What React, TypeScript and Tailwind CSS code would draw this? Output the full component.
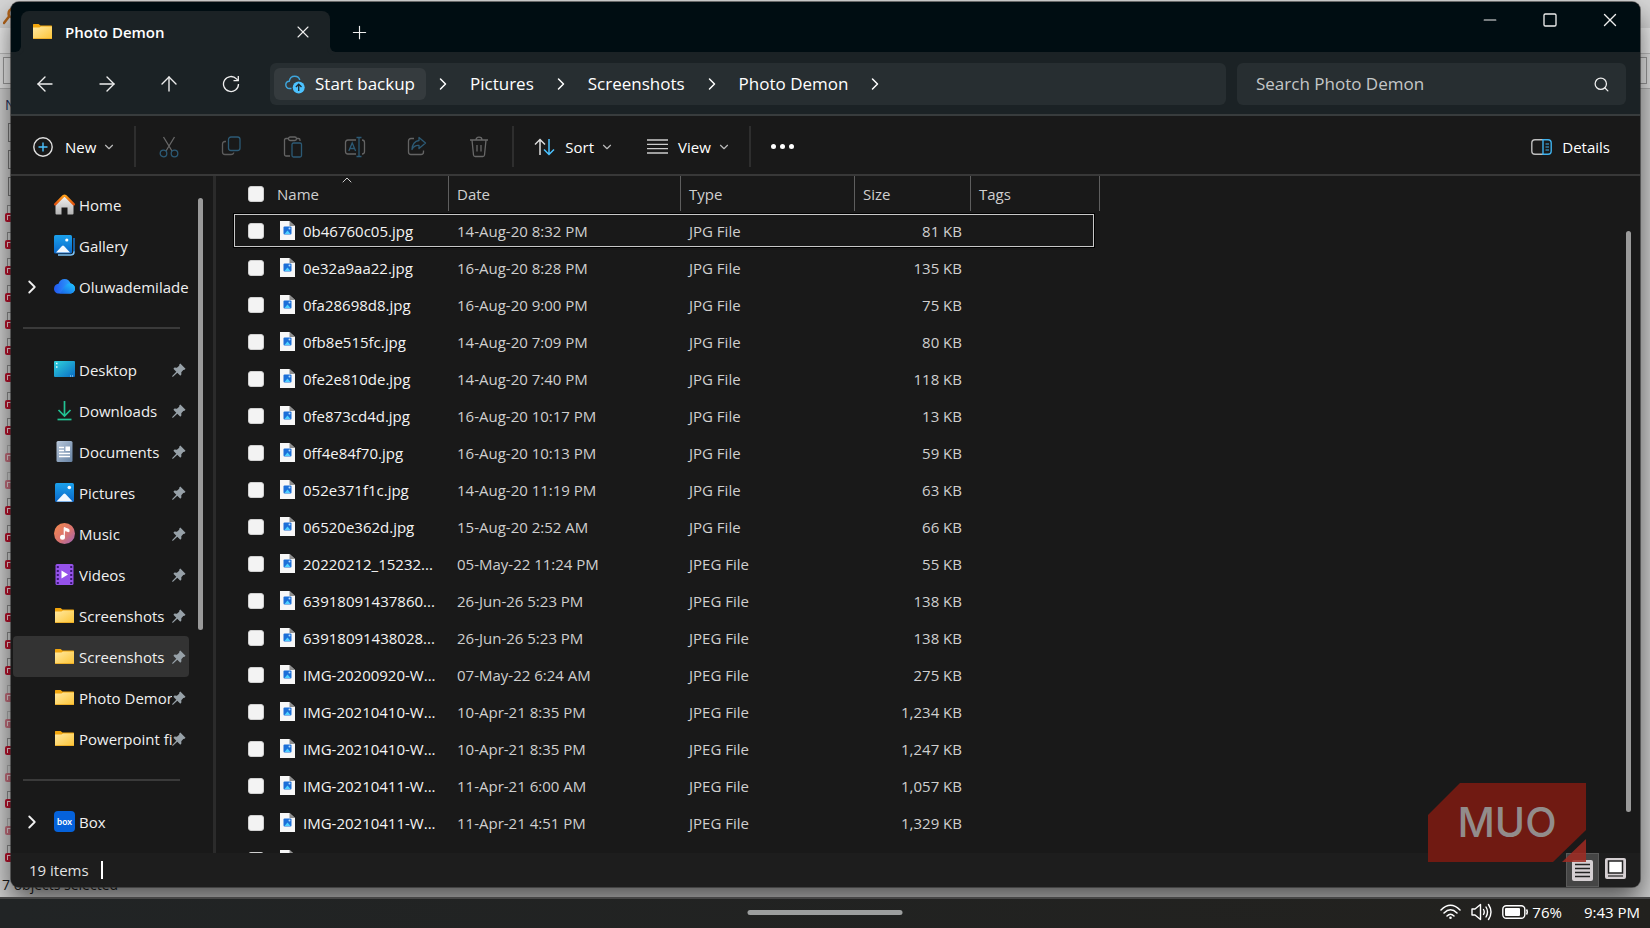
import React from 'react'
import {
  ArrowLeft,
  ArrowRight,
  ArrowUp,
  ChevronDown,
  ChevronRight,
  ChevronUp,
  Minus,
  Plus,
  Search,
  Square,
  X,
} from 'lucide-react'

type FileRow = { name: string; date: string; type: string; size: string }

const files: FileRow[] = [
  { name: '0b46760c05.jpg', date: '14-Aug-20 8:32 PM', type: 'JPG File', size: '81 KB' },
  { name: '0e32a9aa22.jpg', date: '16-Aug-20 8:28 PM', type: 'JPG File', size: '135 KB' },
  { name: '0fa28698d8.jpg', date: '16-Aug-20 9:00 PM', type: 'JPG File', size: '75 KB' },
  { name: '0fb8e515fc.jpg', date: '14-Aug-20 7:09 PM', type: 'JPG File', size: '80 KB' },
  { name: '0fe2e810de.jpg', date: '14-Aug-20 7:40 PM', type: 'JPG File', size: '118 KB' },
  { name: '0fe873cd4d.jpg', date: '16-Aug-20 10:17 PM', type: 'JPG File', size: '13 KB' },
  { name: '0ff4e84f70.jpg', date: '16-Aug-20 10:13 PM', type: 'JPG File', size: '59 KB' },
  { name: '052e371f1c.jpg', date: '14-Aug-20 11:19 PM', type: 'JPG File', size: '63 KB' },
  { name: '06520e362d.jpg', date: '15-Aug-20 2:52 AM', type: 'JPG File', size: '66 KB' },
  { name: '20220212_15232...', date: '05-May-22 11:24 PM', type: 'JPEG File', size: '55 KB' },
  { name: '63918091437860...', date: '26-Jun-26 5:23 PM', type: 'JPEG File', size: '138 KB' },
  { name: '63918091438028...', date: '26-Jun-26 5:23 PM', type: 'JPEG File', size: '138 KB' },
  { name: 'IMG-20200920-W...', date: '07-May-22 6:24 AM', type: 'JPEG File', size: '275 KB' },
  { name: 'IMG-20210410-W...', date: '10-Apr-21 8:35 PM', type: 'JPEG File', size: '1,234 KB' },
  { name: 'IMG-20210410-W...', date: '10-Apr-21 8:35 PM', type: 'JPEG File', size: '1,247 KB' },
  { name: 'IMG-20210411-W...', date: '11-Apr-21 6:00 AM', type: 'JPEG File', size: '1,057 KB' },
  { name: 'IMG-20210411-W...', date: '11-Apr-21 4:51 PM', type: 'JPEG File', size: '1,329 KB' },
]

const FolderIcon = () => (
  <svg width="21" height="21" viewBox="0 0 21 21">
    <defs>
      <linearGradient id="folder" x1="0" y1="0" x2="1" y2="1">
        <stop offset="0" stopColor="#ffe9a3" />
        <stop offset="1" stopColor="#fdc536" />
      </linearGradient>
    </defs>
    <path d="M1 3.5Q1 3 1.6 3H6.6L8.4 4.6H19.4Q20 4.6 20 5.2V9H1Z" fill="#f2a60d" />
    <path d="M1 6.6H7.4L9 5.4H20V17.4Q20 18 19.4 18H1.6Q1 18 1 17.4Z" fill="url(#folder)" />
    <path d="M1 17.5H20" stroke="#e9a722" strokeWidth="0.8" />
  </svg>
)

const HomeIcon = () => (
  <svg width="21" height="21" viewBox="0 0 21 21">
    <defs>
      <linearGradient id="home" x1="0" y1="0" x2="0" y2="1">
        <stop offset="0" stopColor="#f2f2f2" />
        <stop offset="1" stopColor="#b4b4b4" />
      </linearGradient>
      <linearGradient id="roof" x1="0" y1="0" x2="0" y2="1">
        <stop offset="0" stopColor="#ffa01a" />
        <stop offset="1" stopColor="#e04f0c" />
      </linearGradient>
    </defs>
    <path d="M1.5 10L10.5 2L19.5 10V19.5Q19.5 20.5 18.5 20.5H13.5V13.5H7.5V20.5H2.5Q1.5 20.5 1.5 19.5Z" fill="url(#home)" />
    <path d="M1.2 10.3L9.3 2.2Q10.5 1.2 11.7 2.2L19.8 10.3" fill="none" stroke="url(#roof)" strokeWidth="2.4" strokeLinecap="round" />
  </svg>
)

const PictureIcon = ({ stacked }: { stacked?: boolean }) => (
  <svg width="21" height="21" viewBox="0 0 21 21">
    <defs>
      <linearGradient id="sky" x1="0" y1="0" x2="0" y2="1">
        <stop offset="0" stopColor="#1ba1ec" />
        <stop offset="1" stopColor="#0a67c9" />
      </linearGradient>
    </defs>
    {stacked ? (
      <>
        <path d="M20 3V17" stroke="#1670c4" strokeWidth="1.6" />
        <path d="M20 16.5Q20 20 16.8 20H4" fill="none" stroke="#7cc3f7" strokeWidth="1.6" />
        <rect x="0" y="0" width="18" height="18.5" rx="1.5" fill="url(#sky)" />
        <path d="M2 17.5L8 11Q9 10 10 11L16 17.5Z" fill="#f1f8ff" />
        <circle cx="12.8" cy="5" r="1.6" fill="#fff" />
      </>
    ) : (
      <>
        <rect x="1" y="1" width="19" height="19" rx="1.5" fill="url(#sky)" />
        <path d="M2.5 19.5L9.5 12Q10.5 11 11.5 12L18.5 19.5Z" fill="#f1f8ff" />
        <circle cx="15.3" cy="5.5" r="1.8" fill="#fff" />
      </>
    )}
  </svg>
)

const CloudIcon = () => (
  <svg width="21" height="21" viewBox="0 0 21 21">
    <defs>
      <linearGradient id="cloudBack" x1="0" y1="0" x2="1" y2="0">
        <stop offset="0" stopColor="#2257f0" />
        <stop offset="1" stopColor="#2fb5ff" />
      </linearGradient>
      <linearGradient id="cloudFront" x1="0" y1="1" x2="1" y2="0">
        <stop offset="0" stopColor="#1a5fe8" />
        <stop offset="1" stopColor="#1fc8ff" />
      </linearGradient>
    </defs>
    <path d="M5 17.5C1.800 17.5 0 15.3 0 12.7C0 10 2 8 4.5 7.7C5.3 4.7 7.7 3 10.6 3C13.6 3 15.8 4.8 16.6 7.5C19.2 7.9 21 10 21 12.5C21 15.3 19 17.5 16 17.5Z" fill="url(#cloudBack)" />
    <path d="M5 17.5C8.5 17 9 9 15 7.5C18.5 7 21 9.5 21 12.5C21 15.3 19 17.5 16 17.5Z" fill="url(#cloudFront)" />
  </svg>
)

const DesktopIcon = () => (
  <svg width="21" height="21" viewBox="0 0 21 21">
    <defs>
      <linearGradient id="desk" x1="0" y1="0" x2="1" y2="1">
        <stop offset="0" stopColor="#2fd2dc" />
        <stop offset="1" stopColor="#0a6cc4" />
      </linearGradient>
    </defs>
    <rect x="0" y="2" width="21" height="16" rx="1" fill="url(#desk)" />
    <path d="M2 4.5H3.5M2 8H3.5" stroke="#e7fbff" strokeWidth="1.6" />
    <path d="M16 17H17M18 17H19" stroke="#bfe6ff" strokeWidth="1" />
  </svg>
)

const DownloadIcon = () => (
  <svg width="21" height="21" viewBox="0 0 21 21" fill="none" stroke="#22c293" strokeWidth="1.7">
    <path d="M10.5 1V15.5M4.5 10L10.5 16L16.5 10" />
    <path d="M3.5 19.5H17.5" />
  </svg>
)

const DocumentIcon = () => (
  <svg width="21" height="21" viewBox="0 0 21 21">
    <defs>
      <linearGradient id="doc" x1="0" y1="0" x2="1" y2="1">
        <stop offset="0" stopColor="#b9c8da" />
        <stop offset="1" stopColor="#6682a3" />
      </linearGradient>
    </defs>
    <rect x="2.500" y="0" width="16" height="21" rx="1.5" fill="url(#doc)" />
    <path d="M5 6.500H10M5 9.500H10M5 12.500H16M5 15.500H16" stroke="#fff" strokeWidth="1.3" />
    <rect x="11.5" y="5.5" width="4.5" height="4.5" fill="#fff" />
  </svg>
)

const MusicIcon = () => (
  <svg width="21" height="21" viewBox="0 0 21 21">
    <defs>
      <linearGradient id="music" x1="0" y1="0" x2="1" y2="1">
        <stop offset="0" stopColor="#f58a4b" />
        <stop offset="0.55" stopColor="#d9736f" />
        <stop offset="1" stopColor="#9a62b8" />
      </linearGradient>
    </defs>
    <circle cx="10.5" cy="10.5" r="10.5" fill="url(#music)" />
    <circle cx="8.5" cy="14.3" r="2.5" fill="#fff" />
    <path d="M10.2 14V4.5L15 6.5V8.8L11.4 7.6" fill="#fff" stroke="#fff" strokeWidth="1" />
  </svg>
)

const VideoIcon = () => (
  <svg width="21" height="21" viewBox="0 0 21 21">
    <rect x="1.5" y="0" width="18" height="21" rx="1.5" fill="#9552ea" />
    <path d="M3.8 2V20M17.2 2V20" stroke="#3b1875" strokeWidth="2" strokeDasharray="2 2" />
    <path d="M7.5 6.5L14 10.5L7.5 14.5Z" fill="#fff" />
  </svg>
)

const BoxIcon = () => (
  <svg width="21" height="21" viewBox="0 0 21 21">
    <rect width="21" height="21" rx="4" fill="#0562db" />
    <text x="10.5" y="13.5" textAnchor="middle" fontSize="9" fontWeight="700" fill="#fff" fontFamily="Lato, sans-serif">box</text>
  </svg>
)

const PinIcon = () => (
  <svg width="14" height="14" viewBox="0 0 14 14" className="shrink-0">
    <path d="M8.3 0.5L13.5 5.7L12.6 6.8L11.3 6.9L9.3 9.3L9.4 11.6L8.3 12.7L5.3 9.7L1 13.8L0.2 13.8L0.2 13L4.3 8.7L1.4 5.8L2.5 4.6L4.9 4.8L7.2 2.8L7.3 1.4Z" fill="#97a1a8" />
  </svg>
)

const JpgIcon = () => (
  <svg width="15" height="19" viewBox="0 0 15 19" className="shrink-0">
    <path d="M0 0H9.5L15 5V19H0Z" fill="#f7f7f7" />
    <path d="M9.5 0L15 5H9.5Z" fill="#8d8d8d" />
    <rect x="3.5" y="5.5" width="8" height="8" rx="1" fill="#1c6fd8" />
    <path d="M4.5 13L7.5 9.5L10.5 13Z" fill="#4fd0ff" />
    <circle cx="9.5" cy="7.5" r="1" fill="#b9dcff" />
  </svg>
)

const CutIcon = () => (
  <svg width="20" height="22" viewBox="0 0 20 22" fill="none" strokeWidth="1.3">
    <path d="M4.5 1L13 15M15.5 1L7 15" stroke="#686868" />
    <circle cx="4.5" cy="17.5" r="3.3" stroke="#2c5a75" />
    <circle cx="15.5" cy="17.5" r="3.3" stroke="#2c5a75" />
  </svg>
)

const CopyIcon = () => (
  <svg width="20" height="20" viewBox="0 0 20 20" fill="none" strokeWidth="1.3">
    <path d="M5 5.5H4Q1.5 5.5 1.5 8V16Q1.5 18.5 4 18.5H10Q12.5 18.5 12.8 16.5" stroke="#5c5c5c" />
    <rect x="7.5" y="1" width="11.5" height="13.5" rx="2.5" stroke="#2c5a75" />
  </svg>
)

const PasteIcon = () => (
  <svg width="20" height="22" viewBox="0 0 20 22" fill="none" strokeWidth="1.3">
    <path d="M5.5 2.5H3Q1.5 2.5 1.5 4V18.5Q1.5 20 3 20H7M14 2.5H15.5Q17 2.5 17 4V5" stroke="#646464" />
    <rect x="5.5" y="1" width="8" height="3.5" rx="1.7" stroke="#646464" />
    <rect x="9" y="7" width="9.5" height="14" rx="1.5" stroke="#2c5a75" />
  </svg>
)

const RenameIcon = () => (
  <svg width="22" height="22" viewBox="0 0 22 22" fill="none" strokeWidth="1.3">
    <path d="M12 4H4Q1.5 4 1.5 6.5V15.5Q1.5 18 4 18H12M18 4Q20.5 4 20.5 6.5V15.5Q20.5 18 18 18" stroke="#646464" />
    <path d="M15 1.5V20.5M12.5 1.5H17.5M12.5 20.5H17.5M4.8 15L8.2 7L11.6 15M6 12.5H10.4" stroke="#2c5a75" />
  </svg>
)

const ShareIcon = () => (
  <svg width="20" height="20" viewBox="0 0 20 20" fill="none" strokeWidth="1.3" strokeLinejoin="round">
    <path d="M7 2.5H4Q1.5 2.5 1.5 5V16Q1.5 18.5 4 18.5H14Q16.5 18.5 16.5 16V14.5" stroke="#646464" />
    <path d="M12 1.5L18.5 7L12 12.5V9.5Q7.5 9 5 13.5Q5.5 5.5 12 4.5Z" stroke="#2c5a75" />
  </svg>
)

const TrashIcon = () => (
  <svg width="20" height="22" viewBox="0 0 20 22" fill="none" stroke="#686868" strokeWidth="1.3">
    <path d="M1 4H19M3 4L4.5 19Q4.7 20.5 6.2 20.5H13.8Q15.3 20.5 15.5 19L17 4M8 9V15.5M12 9V15.5M7 4Q7 1.2 10 1.2Q13 1.2 13 4" />
  </svg>
)

const BackupIcon = () => (
  <svg width="20" height="19" viewBox="0 0 20 19" className="shrink-0">
    <path d="M6.5 13.5H4.5C2.3 13.5 0.8 11.8 0.8 9.8C0.8 7.8 2.3 6.3 4.3 6.2C4.7 3.3 6.9 1.2 9.7 1.2C12.2 1.2 14.2 2.7 14.8 5" fill="none" stroke="#3ea6dd" strokeWidth="1.4" />
    <circle cx="13.7" cy="12.5" r="6" fill="#4cc2ff" />
    <path d="M13.7 16V9.5M10.9 12L13.7 9.2L16.5 12" fill="none" stroke="#1f2a30" strokeWidth="1.3" />
  </svg>
)

const RefreshIcon = () => (
  <svg width="18" height="18" viewBox="0 0 18 18" fill="none" stroke="#eee" strokeWidth="1.3">
    <path d="M16.5 9A7.5 7.5 0 1 1 14.5 3.9L16 5.5" />
    <path d="M16.3 1V5.7H11.5" />
  </svg>
)

const DetailsIcon = () => (
  <svg width="21" height="16" viewBox="0 0 21 16" fill="none" strokeWidth="1.4">
    <path d="M12 0.8H4Q0.8 0.8 0.8 4V12Q0.8 15.2 4 15.2H12" stroke="#bdbdbd" />
    <path d="M12 0.8H17Q20.2 0.8 20.2 4V12Q20.2 15.2 17 15.2H12Z" stroke="#3fb2ee" />
    <path d="M14.5 5H18M14.5 8H18M14.5 11H18" stroke="#3fb2ee" strokeWidth="1.2" />
  </svg>
)

const WifiIcon = () => (
  <svg width="21" height="16" viewBox="0 0 21 16" fill="none" stroke="#fff" strokeWidth="1.5" strokeLinecap="round">
    <path d="M1 6Q10.5 -3.5 20 6M4 9Q10.5 2.5 17 9M7 12Q10.5 8.5 14 12" />
    <circle cx="10.5" cy="13.8" r="1.3" fill="#fff" stroke="none" />
  </svg>
)

const VolumeIcon = () => (
  <svg width="21" height="18" viewBox="0 0 21 18" fill="none" stroke="#fff" strokeWidth="1.4" strokeLinecap="round" strokeLinejoin="round">
    <path d="M1 6H4L9.5 1.5V16.5L4 12H1Z" />
    <path d="M12.5 6.5Q14 9 12.5 11.5M15 4Q18 9 15 14M17.5 1.5Q22.5 9 17.5 16.5" />
  </svg>
)

const BatteryIcon = () => (
  <svg width="26" height="14" viewBox="0 0 26 14">
    <rect x="0.8" y="0.8" width="22" height="12.4" rx="3.5" fill="none" stroke="#fff" strokeWidth="1.4" />
    <rect x="3" y="3" width="15" height="8" rx="1" fill="#fff" />
    <path d="M24.5 4.5Q26 7 24.5 9.5" stroke="#fff" strokeWidth="1.5" fill="none" />
  </svg>
)

type NavItem = { label: string; icon: React.ReactNode; pinned?: boolean; expandable?: boolean; active?: boolean }

const topItems: NavItem[] = [
  { label: 'Home', icon: <HomeIcon /> },
  { label: 'Gallery', icon: <PictureIcon stacked /> },
  { label: 'Oluwademilade', icon: <CloudIcon />, expandable: true },
]

const pinnedItems: NavItem[] = [
  { label: 'Desktop', icon: <DesktopIcon />, pinned: true },
  { label: 'Downloads', icon: <DownloadIcon />, pinned: true },
  { label: 'Documents', icon: <DocumentIcon />, pinned: true },
  { label: 'Pictures', icon: <PictureIcon />, pinned: true },
  { label: 'Music', icon: <MusicIcon />, pinned: true },
  { label: 'Videos', icon: <VideoIcon />, pinned: true },
  { label: 'Screenshots', icon: <FolderIcon />, pinned: true },
  { label: 'Screenshots', icon: <FolderIcon />, pinned: true, active: true },
  { label: 'Photo Demon', icon: <FolderIcon />, pinned: true },
  { label: 'Powerpoint files', icon: <FolderIcon />, pinned: true },
]

const SideItem = ({ item }: { item: NavItem }) => (
  <a
    href="#"
    className={`flex h-[41px] items-center text-[15px] text-[#f0f0f0] ${item.active ? 'rounded-sm bg-[#333333]' : ''}`}
  >
    <span className="flex w-[41px] shrink-0 justify-center pr-1">
      {item.expandable && <ChevronRight size={22} strokeWidth={2} />}
    </span>
    <span className="shrink-0">{item.icon}</span>
    <span className="ml-1 min-w-0 flex-1 overflow-hidden whitespace-nowrap">{item.label}</span>
    {item.pinned && (
      <span className="mr-[3px]">
        <PinIcon />
      </span>
    )}
  </a>
)

const SideRule = () => (
  <div className="flex h-[42px] items-center pr-[9px] pl-[10px]">
    <div className="h-0.5 w-full bg-[#3a3a3a]" />
  </div>
)

const Sidebar = () => (
  <aside className="flex w-[205px] shrink-0 overflow-hidden border-r-3 border-[#2b2b2b] pt-2 pl-0.5">
    <nav className="w-[176px] shrink-0">
      {topItems.map(item => <SideItem key={item.label} item={item} />)}
      <SideRule />
      {pinnedItems.map((item, i) => <SideItem key={i} item={item} />)}
      <SideRule />
      <SideItem item={{ label: 'Box', icon: <BoxIcon />, expandable: true }} />
    </nav>
    <div className="mt-3.5 ml-[9px] h-[432px] w-[5px] rounded-full bg-[#9a9a9a]" />
  </aside>
)

const Check = ({ label }: { label: string }) => (
  <input
    type="checkbox"
    aria-label={label}
    className="size-4 shrink-0 appearance-none rounded-[3px] border border-[#cfcfcf] bg-[#f3f3f3]"
  />
)

const headCell = 'relative p-0 pl-2 text-left font-normal after:absolute after:top-0 after:right-0 after:h-[35px] after:w-px after:bg-[#5e5e5e]'

const FileTable = () => (
  <table className="w-[866px] table-fixed border-collapse text-[15px] text-[#cfcfcf]">
    <colgroup>
      <col className="w-[215px]" />
      <col className="w-[232px]" />
      <col className="w-[174px]" />
      <col className="w-[116px]" />
      <col className="w-[129px]" />
    </colgroup>
    <thead>
      <tr className="h-9">
        <th className={headCell}>
          <div className="flex items-center gap-[13px] pl-1.5">
            <Check label="Select all" />
            Name
          </div>
          <ChevronUp size={16} strokeWidth={1.5} className="absolute -top-1 left-[105px]" />
        </th>
        <th className={headCell}>Date</th>
        <th className={headCell}>Type</th>
        <th className={headCell}>Size</th>
        <th className={headCell}>Tags</th>
      </tr>
    </thead>
    <tbody>
      {files.map((f, i) => (
        <tr key={i} className="relative h-[37px]">
          <td className="p-0 pl-3.5">
            <div className="flex items-center whitespace-nowrap text-[#f4f4f4]">
              <Check label={`Select ${f.name}`} />
              <span className="mr-2 ml-4"><JpgIcon /></span>
              {f.name}
            </div>
            {i === 0 && <span className="absolute inset-y-0.5 right-1.5 left-0 border border-[#c8c8c8] outline outline-black" />}
          </td>
          <td className="p-0 pl-2">{f.date}</td>
          <td className="p-0 pl-2">{f.type}</td>
          <td className="p-0 pr-[9px] text-right">{f.size}</td>
          <td className="p-0" />
        </tr>
      ))}
      <tr className="h-[37px]">
        <td className="p-0 pl-3.5">
          <div className="flex items-center">
            <Check label="Select file" />
            <span className="ml-4"><JpgIcon /></span>
          </div>
        </td>
        <td colSpan={4} />
      </tr>
    </tbody>
  </table>
)

const Divider = () => <div className="h-[41px] w-0.5 shrink-0 bg-[#2e2e2e]" />

const disabledActions = [
  { label: 'Cut', icon: <CutIcon /> },
  { label: 'Copy', icon: <CopyIcon /> },
  { label: 'Paste', icon: <PasteIcon /> },
  { label: 'Rename', icon: <RenameIcon /> },
  { label: 'Share', icon: <ShareIcon /> },
  { label: 'Delete', icon: <TrashIcon /> },
]

const Toolbar = () => (
  <div className="flex h-[60px] shrink-0 items-center border-b-2 border-[#383838] pt-[3px] text-[15px] font-medium text-white">
    <button className="flex items-center pl-[22px]">
      <svg width="20" height="20" viewBox="0 0 20 20" fill="none" strokeWidth="1.4">
        <circle cx="10" cy="10" r="9.2" stroke="#e0e0e0" />
        <path d="M10 5.5V14.5M5.500 10H14.5" stroke="#4cc2ff" />
      </svg>
      <span className="ml-3">New</span>
      <ChevronDown size={14} strokeWidth={2} className="mr-[18px] ml-1.5 text-[#bbb]" />
    </button>
    <Divider />
    <div className="flex px-0.5">
      {disabledActions.map(a => (
        <button key={a.label} aria-label={a.label} disabled className="flex w-[62px] justify-center">
          {a.icon}
        </button>
      ))}
    </div>
    <Divider />
    <button className="flex items-center pl-5">
      <svg width="21" height="18" viewBox="0 0 21 18" fill="none" strokeWidth="1.5">
        <path d="M6 17V1.5M1 6.5L6 1.5L11 6.5" stroke="#ddd" />
        <path d="M15 1V16.5M10 11.5L15 16.5L20 11.5" stroke="#4cc2ff" />
      </svg>
      <span className="ml-2.5">Sort</span>
      <ChevronDown size={14} strokeWidth={2} className="ml-1.5 text-[#bbb]" />
    </button>
    <button className="flex items-center pl-[33px]">
      <svg width="21" height="15" viewBox="0 0 21 15" stroke="#ccc" strokeWidth="1.3">
        <path d="M0 1H21M0 5.3H21M0 9.6H21M0 14H21" />
      </svg>
      <span className="ml-2.5">View</span>
      <ChevronDown size={14} strokeWidth={2} className="mr-[18px] ml-1.5 text-[#bbb]" />
    </button>
    <Divider />
    <button aria-label="More" className="flex gap-1 pl-5">
      <span className="size-[5px] rounded-full bg-white" />
      <span className="size-[5px] rounded-full bg-white" />
      <span className="size-[5px] rounded-full bg-white" />
    </button>
    <button className="mr-[30px] ml-auto flex items-center gap-2.5">
      <DetailsIcon />
      Details
    </button>
  </div>
)

const TitleBar = () => (
  <div className="flex h-[50px] shrink-0 items-end rounded-t-lg bg-[#000d12] pl-2.5">
    <div className="relative flex h-[41px] w-[309px] items-center rounded-t-lg bg-[#1b2225] pr-[17px] pl-[11px] before:absolute before:bottom-0 before:-left-1.5 before:size-1.5 before:rounded-br-md before:shadow-[2px_2px_0_1px_#1b2225] after:absolute after:-right-1.5 after:bottom-0 after:size-1.5 after:rounded-bl-md after:shadow-[-2px_2px_0_1px_#1b2225]">
      <FolderIcon />
      <span className="ml-3 flex-1 text-[15px] font-semibold text-white">Photo Demon</span>
      <button aria-label="Close tab" className="text-[#eee]">
        <X size={20} strokeWidth={1.3} />
      </button>
    </div>
    <button aria-label="New tab" className="mb-[9px] ml-[19px] text-[#eee]">
      <Plus size={21} strokeWidth={1.3} />
    </button>
    <div className="ml-auto flex self-start text-[#eee]">
      <button aria-label="Minimize" className="flex h-9 w-[60px] items-center justify-center">
        <Minus size={20} strokeWidth={1.3} />
      </button>
      <button aria-label="Maximize" className="flex h-9 w-[60px] items-center justify-center">
        <Square size={16} strokeWidth={2} />
      </button>
      <button aria-label="Close" className="flex h-9 w-[60px] items-center justify-center">
        <X size={22} strokeWidth={1.5} />
      </button>
    </div>
  </div>
)

const navButton = 'flex h-[42px] w-[62px] shrink-0 items-center justify-center text-[#eee]'

const AddressBar = () => (
  <div className="flex h-16 shrink-0 items-center border-b-2 border-[#383c3d] bg-[#1b2225] pt-0.5 pr-3.5 pl-[3px]">
    <button aria-label="Back" className={navButton}><ArrowLeft size={24} strokeWidth={1.4} /></button>
    <button aria-label="Forward" className={navButton}><ArrowRight size={24} strokeWidth={1.4} /></button>
    <button aria-label="Up" className={navButton}><ArrowUp size={24} strokeWidth={1.4} /></button>
    <button aria-label="Refresh" className={navButton}><RefreshIcon /></button>
    <div className="ml-2 flex h-[42px] min-w-0 flex-1 items-center rounded-md bg-[#272e31] pl-1 text-[17px] text-white">
      <button className="flex h-8 items-center gap-2.5 rounded-md bg-[#353b3e] px-[11px]">
        <BackupIcon />
        Start backup
      </button>
      {['Pictures', 'Screenshots', 'Photo Demon'].map(crumb => (
        <React.Fragment key={crumb}>
          <ChevronRight size={20} strokeWidth={1.8} className="mx-[7px]" />
          <button className="px-2.5">{crumb}</button>
        </React.Fragment>
      ))}
      <ChevronRight size={20} strokeWidth={1.8} className="mx-[7px]" />
    </div>
    <label className="ml-[11px] flex h-[42px] w-[389px] items-center rounded-md bg-[#272e31] pr-4 pl-[19px]">
      <input
        type="text"
        aria-label="Search Photo Demon"
        placeholder="Search Photo Demon"
        className="min-w-0 flex-1 bg-transparent text-[17px] text-white outline-none placeholder:text-[#c4c7c8]"
      />
      <Search size={17} strokeWidth={1.8} className="text-[#eee]" />
    </label>
  </div>
)

const StatusBar = () => (
  <footer className="flex h-[34px] shrink-0 items-center rounded-b-lg bg-[#1d1d1d] pr-2 pl-[18px] text-[15px] text-[#e2e2e2]">
    <span>19 items</span>
    <span className="ml-3 h-[18px] w-0.5 bg-white" />
    <button aria-label="Details view" className="ml-auto flex h-full w-[33px] items-center justify-center border border-[#5a5a5a] bg-[#454545]">
      <svg width="21" height="21" viewBox="0 0 21 21">
        <rect width="21" height="21" rx="2" fill="#d5cfd2" />
        <path d="M3 4.5H18M3 8.5H18M3 12.5H18M3 16.5H18" stroke="#222" strokeWidth="1.6" />
      </svg>
    </button>
    <button aria-label="Thumbnail view" className="flex h-full w-[33px] items-center justify-center pb-1">
      <svg width="21" height="21" viewBox="0 0 21 21">
        <rect width="21" height="21" rx="2" fill="#d5cfd2" />
        <rect x="3.5" y="3" width="14" height="12" fill="#fff" stroke="#222" strokeWidth="1.5" />
        <path d="M3 18H18" stroke="#222" strokeWidth="1.2" />
      </svg>
    </button>
  </footer>
)

const Watermark = () => (
  <svg width="158" height="79" viewBox="0 0 158 79" className="pointer-events-none absolute right-[54px] bottom-[25px]">
    <path d="M32 0H158V47L125 79H0V32Z" fill="#701a12" />
    <path d="M158 56V79H134Z" fill="#a02a22" fillOpacity="0.85" />
    <text x="79" y="54" textAnchor="middle" fontSize="41" fontWeight="500" fill="#928c8b" fontFamily="Inter, sans-serif">MUO</text>
  </svg>
)

const faded = [9, 10, 18, 19, 21, 23]

// The window underneath, only its edges stick out
const BackWindow = () => (
  <div className="absolute inset-0 overflow-hidden bg-[#cfcfcf]" aria-hidden="true">
    <div className="h-7 bg-[#d6d6d6]" />
    <div className="h-[26px] border-b border-[#bdbdbd] bg-[#ebebeb]" />
    <div className="h-[35px] border-b border-[#b0b0b0] bg-[#e2e2e2] px-[3px] pt-[3px]">
      <div className="h-[27px] border border-[#9a9a9a] bg-[#e8e8e8]" />
    </div>
    <div className="pt-[6px] pl-[5px] text-[14px] text-[#22305c]">Name</div>
    <div className="mt-2 flex flex-col gap-2 pl-2">
      <div className="size-[19px] border border-[#777] bg-[#cfcfcf]" />
      <div className="size-[19px] border border-[#777] bg-[#cfcfcf]" />
      <div className="size-[19px] border border-[#777] bg-[#cfcfcf]" />
    </div>
    <div className="absolute top-[205px] bottom-[35px] left-0 flex flex-col justify-between">
      {Array.from({ length: 25 }, (_, i) => (
        <div key={i} className={`pl-[5px] ${faded.includes(i) ? 'opacity-50' : ''}`}>
          <div className="ml-0.5 h-2 w-4 border-t border-l border-[#8a8a8a] bg-[#d6d6d6]" />
          <div className="flex h-[9px] w-4 items-center rounded-[2px] bg-[#b8122d] pl-0.5">
            <span className="h-[5px] w-1 border-t border-l border-white/80" />
          </div>
        </div>
      ))}
    </div>
    <svg width="12" height="18" viewBox="0 0 12 18" className="absolute top-[7px] left-[3px]">
      <path d="M1 16L6 9.5M12 1Q4 2 6 9L10 11" fill="none" stroke="#b5651a" strokeWidth="2.5" strokeLinecap="round" />
    </svg>
    <div className="absolute bottom-0.5 left-0.5 text-[14px] text-[#1c1c1c]">7 objects selected</div>
  </div>
)

const Taskbar = () => (
  <div className="relative flex h-[31px] shrink-0 items-center border-t-2 border-[#454545] bg-linear-to-r from-[#212425] to-[#22211e] pr-2.5 pb-1 text-[15px] text-white">
    <div className="absolute top-[11px] left-1/2 h-[5px] w-[155px] -translate-x-1/2 rounded-full bg-[#9c9e9e]" />
    <div className="ml-auto flex items-center">
      <WifiIcon />
      <span className="ml-2.5"><VolumeIcon /></span>
      <span className="ml-2.5"><BatteryIcon /></span>
      <span className="ml-1">76%</span>
      <span className="ml-[22px]">9:43 PM</span>
    </div>
  </div>
)

export default function App() {
  return (
    <div className="flex h-screen flex-col overflow-hidden bg-[#212425] font-['Open_Sans','Noto_Sans',sans-serif] leading-5">
      <div className="relative flex min-h-0 flex-1 flex-col">
        <BackWindow />
        <div className="relative mt-0.5 mr-2.5 mb-2.5 ml-[11px] flex min-h-0 flex-1 flex-col rounded-lg bg-[#191919] shadow-[0_14px_28px_0_rgba(0,0,0,0.6)] ring-1 ring-[#2c2c2c]/60">
          <TitleBar />
          <AddressBar />
          <Toolbar />
          <div className="flex min-h-0 flex-1">
            <Sidebar />
            <main className="flex min-w-0 flex-1 overflow-hidden pl-[18px]">
              <FileTable />
              <div className="mt-[55px] mr-[9px] mb-[41px] ml-auto w-[5px] rounded-full bg-[#9a9a9a]" />
            </main>
          </div>
          <StatusBar />
          <Watermark />
        </div>
      </div>
      <Taskbar />
    </div>
  )
}
